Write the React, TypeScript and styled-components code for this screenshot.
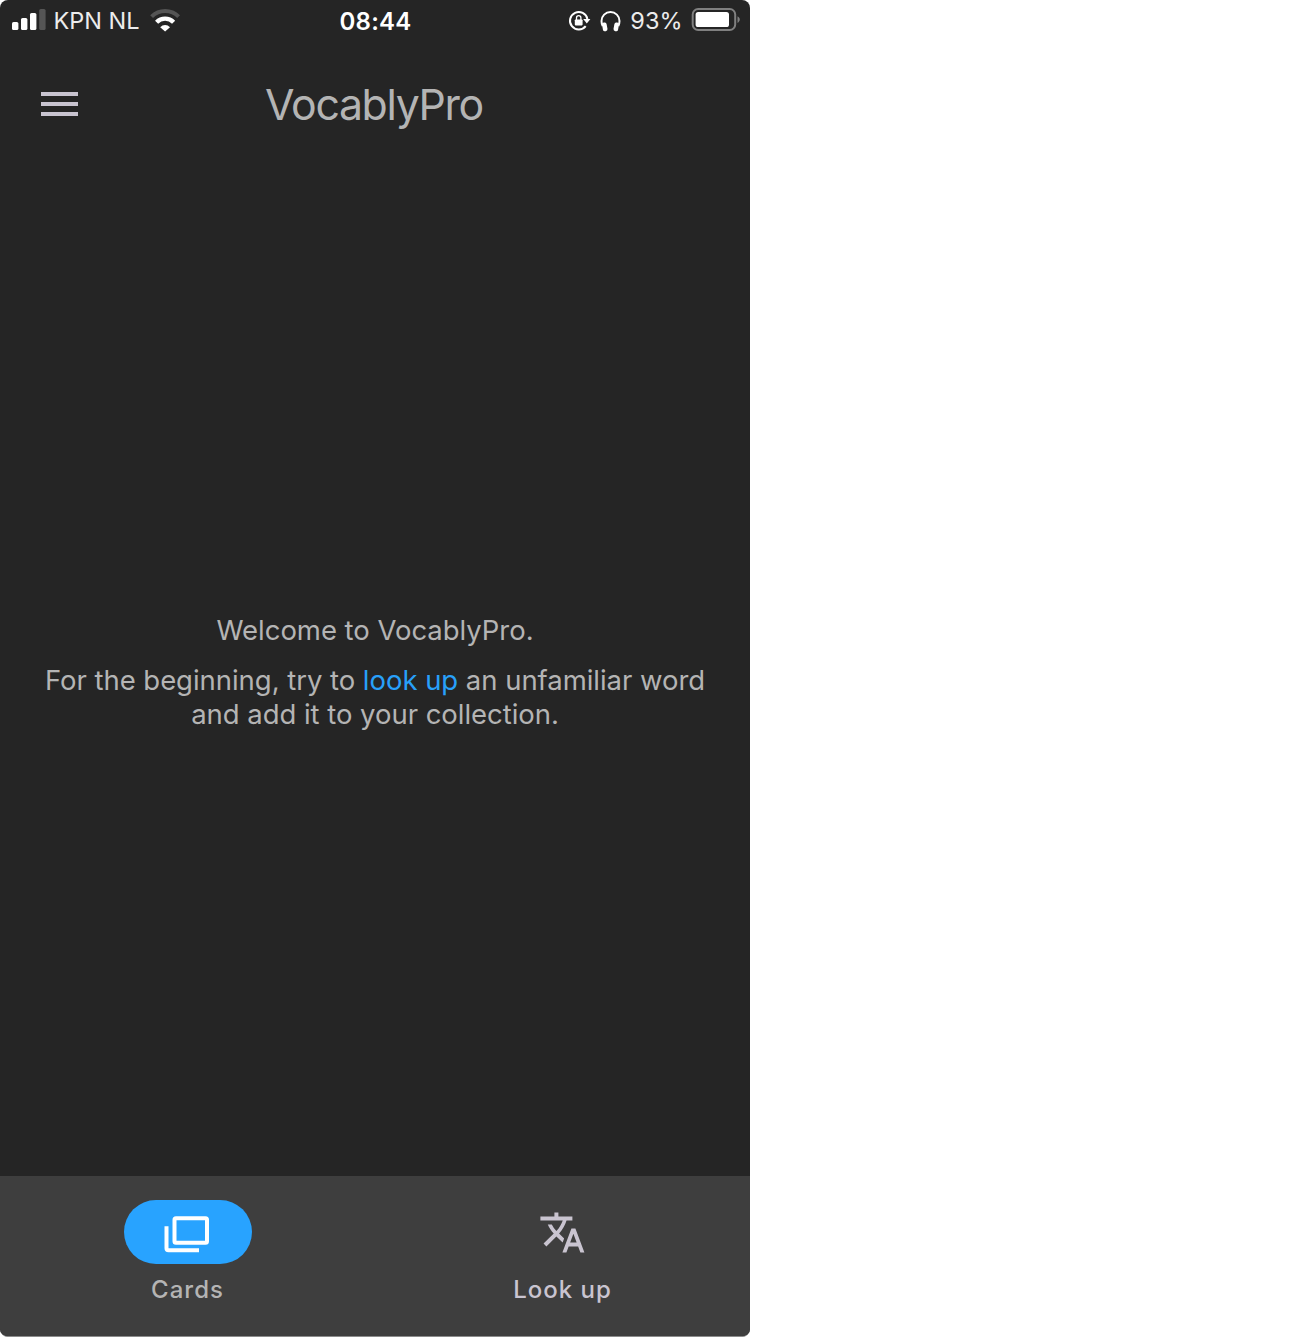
import React from "react";
import styled, { createGlobalStyle } from "styled-components";

const GlobalStyle = createGlobalStyle`
  body { margin: 0; background: #fff; }
  * { box-sizing: border-box; }
`;

const Phone = styled.div`
  width: 750px;
  height: 1337px;
  display: flex;
  flex-direction: column;
  overflow: hidden;
  border-radius: 8px;
  border-bottom: 1px solid #8c8c8c;
  background: #252525;
  color: #b4b4b4;
  font-family: Inter, "Liberation Sans", sans-serif;
`;

const StatusBar = styled.div`
  height: 40px;
  display: grid;
  grid-template-columns: 1fr auto 1fr;
  align-items: center;
  padding: 0 10px 2px 12px;
  color: #fff;
`;

const StatusGroup = styled.div<{ $end?: boolean }>`
  display: flex;
  align-items: center;
  justify-content: ${(p) => (p.$end ? "flex-end" : "flex-start")};
`;

const StatusIcons = styled.div`
  display: flex;
  align-items: center;
  gap: 9px;
`;

const Label = styled.span<{ $size: number; $spacing?: number; $weight?: number }>`
  font-size: ${(p) => p.$size}px;
  font-weight: ${(p) => p.$weight ?? 400};
  letter-spacing: ${(p) => p.$spacing ?? 0}px;
  line-height: 38px;
  white-space: nowrap;
`;

const Carrier = styled(Label)`
  margin: 2px 10px 0 7.5px;
  color: #ececec;
`;
const Clock = styled(Label)`
  margin: 3px 1px -1px 0;
`;
const Percent = styled(Label)`
  margin: 2px 8.5px 0 9px;
  color: #ececec;
`;

const Header = styled.header`
  height: 128px;
  display: grid;
  grid-template-columns: 80px 1fr 80px;
  align-items: center;
`;

const MenuButton = styled.button`
  display: flex;
  flex-direction: column;
  gap: 6px;
  width: 37px;
  margin: 0 0 0 41px;
  padding: 0;
  border: 0;
  background: none;
`;
const MenuLine = styled.span`
  height: 4px;
  background: #c9c4d0;
`;

const Title = styled.h1`
  margin: 2px 2px 0 0;
  text-align: center;
  font-size: 42.8px;
  font-weight: 400;
  line-height: 52px;
  letter-spacing: -1.35px;
`;

const Main = styled.main`
  flex: 1;
  display: flex;
  flex-direction: column;
  align-items: center;
  justify-content: center;
  gap: 16px;
  text-align: center;
`;

const Paragraph = styled.p`
  margin: 0;
  font-size: 27.5px;
  line-height: 34px;
  letter-spacing: -0.04px;
`;
const Link = styled.a`
  color: #28a0fa;
`;

const Nav = styled.nav`
  height: 160px;
  display: grid;
  grid-template-columns: 1fr 1fr;
  background: #3e3e3e;
`;
const Tab = styled.div<{ $active?: boolean }>`
  display: flex;
  flex-direction: column;
  align-items: center;
  padding-top: 24px;
  color: ${(p) => (p.$active ? "#b4b4b4" : "#c9c4d0")};
`;
const Pill = styled.div<{ $active?: boolean }>`
  width: 128px;
  height: 64px;
  display: flex;
  align-items: center;
  justify-content: center;
  padding-right: 2px;
  border-radius: 32px;
  background: ${(p) => (p.$active ? "#28a3ff" : "transparent")};
`;
const TabLabel = styled.span`
  margin-top: 10px;
  font-size: 24px;
  font-weight: 500;
  line-height: 32px;
  letter-spacing: 1px;
`;

const Signal = () => (
  <svg width="34" height="24" viewBox="12 8 34 24" fill="#fff">
    <rect x="12" y="22" width="6.4" height="8" rx="1.6" />
    <rect x="21" y="18" width="6.4" height="12" rx="1.6" />
    <rect x="30" y="13" width="6.4" height="17" rx="1.6" />
    <rect x="39.2" y="9" width="6.4" height="21" rx="1.6" fill="#555" />
  </svg>
);

const Wifi = () => (
  <svg width="30" height="24" viewBox="150 8 30 24" fill="none">
    <path d="M151.6 16.6a19.2 19.2 0 0 1 27 0" stroke="#555" strokeWidth="4" />
    <path d="M156.6 22.2a12 12 0 0 1 17 0" stroke="#fff" strokeWidth="4.4" />
    <path d="M160.2 27.2a6.8 6.8 0 0 1 9.8 0l-4.9 4.3z" fill="#fff" />
  </svg>
);

const RotationLock = () => (
  <svg width="23" height="24" viewBox="568 8 23 24" fill="none">
    <path d="M585.7 26.2A8.8 8.8 0 1 1 587.4 19" stroke="#fff" strokeWidth="2" />
    <path d="M583.2 19h7.2l-3.6 4.6z" fill="#fff" />
    <rect x="574.8" y="19.4" width="7.8" height="6" rx="0.8" fill="#fff" />
    <path d="M576.5 20v-2.2a2.2 2.2 0 0 1 4.4 0V20" stroke="#fff" strokeWidth="1.3" />
  </svg>
);

const Headphones = () => (
  <svg width="21" height="24" viewBox="600.5 8 21 24" fill="none">
    <path d="M603.2 26C602.2 24 602 22.5 602 21a9 9 0 0 1 18 0c0 1.5-.2 3-1.2 5" stroke="#fff" strokeWidth="2" />
    <rect x="603" y="22.5" width="4.6" height="8.8" rx="2" fill="#fff" transform="rotate(-10 605.3 27)" />
    <rect x="614.4" y="22.5" width="4.6" height="8.8" rx="2" fill="#fff" transform="rotate(10 616.7 27)" />
  </svg>
);

const Battery = () => (
  <svg width="49" height="24" viewBox="691 8 49 24" fill="none">
    <rect x="692.7" y="9" width="42.5" height="21" rx="5.5" stroke="#808080" strokeWidth="2" />
    <rect x="695.6" y="12" width="33.4" height="15" rx="2.6" fill="#fff" />
    <path d="M737.5 16.3c3 1.5 3 5 0 6.6z" fill="#808080" />
  </svg>
);

const CardsIcon = () => (
  <svg width="48" height="48" viewBox="163 1208 48 48" fill="none" stroke="#fff" strokeWidth="4">
    <rect x="174.5" y="1218.3" width="32.5" height="24.5" rx="1.5" />
    <path d="M166.5 1226.3v22a2 2 0 0 0 2 2H199" />
  </svg>
);

const TranslateIcon = () => (
  <svg width="48" height="48" viewBox="-0.2 -0.2 24 24" fill="currentColor">
    <path d="M12.87 15.07l-2.54-2.51.03-.03c1.74-1.94 2.98-4.17 3.71-6.53H17V4h-7V2H8v2H1v1.99h11.17C11.5 7.92 10.44 9.75 9 11.35 8.07 10.32 7.3 9.19 6.69 8h-2c.73 1.63 1.73 3.17 2.98 4.56l-5.09 5.02L4 19l5-5 3.11 3.11.76-2.04zM18.5 10h-2L12 22h2l1.12-3h4.75L21 22h2l-4.5-12zm-2.62 7l1.62-4.33L19.12 17h-3.24z" />
  </svg>
);

export default function App() {
  return (
    <>
      <GlobalStyle />
      <Phone>
        <StatusBar>
          <StatusGroup>
            <Signal />
            <Carrier $size={23.5}>KPN NL</Carrier>
            <Wifi />
          </StatusGroup>
          <Clock $size={24} $weight={600} $spacing={0.25}>08:44</Clock>
          <StatusGroup $end>
            <StatusIcons>
              <RotationLock />
              <Headphones />
            </StatusIcons>
            <Percent $size={23.5}>93%</Percent>
            <Battery />
          </StatusGroup>
        </StatusBar>
        <Header>
          <MenuButton aria-label="Menu">
            <MenuLine />
            <MenuLine />
            <MenuLine />
          </MenuButton>
          <Title>VocablyPro</Title>
        </Header>
        <Main>
          <Paragraph>Welcome to VocablyPro.</Paragraph>
          <Paragraph>
            For the beginning, try to <Link>look up</Link> an unfamiliar word
            <br />
            and add it to your collection.
          </Paragraph>
        </Main>
        <Nav>
          <Tab $active>
            <Pill $active>
              <CardsIcon />
            </Pill>
            <TabLabel>Cards</TabLabel>
          </Tab>
          <Tab>
            <Pill>
              <TranslateIcon />
            </Pill>
            <TabLabel>Look up</TabLabel>
          </Tab>
        </Nav>
      </Phone>
    </>
  );
}
